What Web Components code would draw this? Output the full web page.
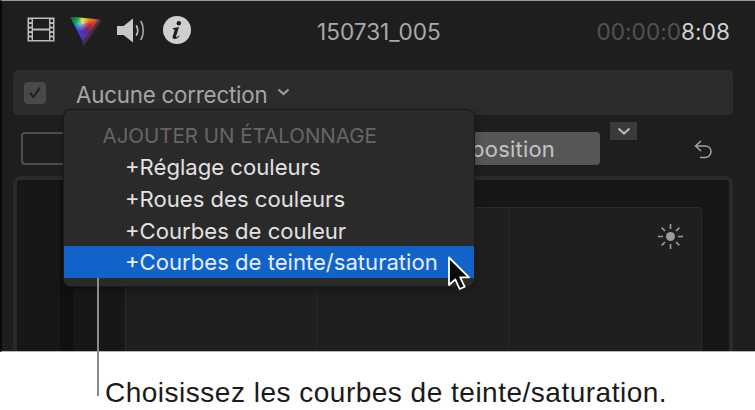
<!DOCTYPE html>
<html lang="fr"><head><meta charset="utf-8"><title>Courbes</title>
<style>
html,body{margin:0;padding:0;background:#fff}
body{width:755px;height:410px;overflow:hidden;font-family:Inter,"Liberation Sans",sans-serif}
</style></head><body>
<fcp-shell>
  <fcp-header slot="head"></fcp-header>
  <correction-bar slot="head"></correction-bar>
  <fcp-toolbar slot="head"></fcp-toolbar>
  <graph-panel slot="head"></graph-panel>
  <popup-menu slot="over">
    <menu-item heading>AJOUTER UN ÉTALONNAGE</menu-item>
    <menu-item>+Réglage couleurs</menu-item>
    <menu-item>+Roues des couleurs</menu-item>
    <menu-item>+Courbes de couleur</menu-item>
    <menu-item active>+Courbes de teinte/saturation</menu-item>
  </popup-menu>
  <mouse-cursor slot="over"></mouse-cursor>
</fcp-shell>
<callout-caption>Choisissez les courbes de teinte/saturation.</callout-caption>
<script>
function def(name,html){
  customElements.define(name,class extends HTMLElement{
    constructor(){super();this.attachShadow({mode:'open'}).innerHTML=html;}
  });
}
def('fcp-shell',`<style>
:host{display:block;position:relative;height:350px;box-sizing:content-box;background:#1e1e1e;border-top:1px solid #9a9a9a;border-left:2px solid #070707;border-bottom:1px solid #b5b5b5;width:753px;overflow:visible}
.clip{height:350px;overflow:hidden;display:flex;flex-direction:column}
</style><div class="clip"><slot name="head"></slot></div><slot name="over"></slot>`);

def('fcp-header',`<style>
:host{display:flex;align-items:center;height:69px;box-sizing:border-box;padding:0 24px 8px 25px;color:#c4c4c4;font:22.6px Inter,"Liberation Sans",sans-serif;flex:none}
.icons{display:flex;align-items:center;width:290px;flex:none;margin-top:-3px}
svg,.tri{display:block;flex:none}
.title{color:#a9a9a9}
.tc{margin-left:auto;color:#d0d0d0;margin-right:1px;letter-spacing:.05px}
.tc span{color:#525252}
.triwrap{position:relative;width:32px;height:30px;margin-left:15px;margin-top:3px}
.shade{position:absolute;inset:0;background:#3d3040;clip-path:polygon(100% 13%,42% 100%,38% 80%,86% 10%)}
.tri{position:absolute;inset:0;clip-path:polygon(0 0,92% 10%,40% 84%);background:radial-gradient(circle at 38% 24%,rgba(255,255,255,.5),rgba(255,255,255,0) 22%),conic-gradient(from 0deg at 38% 24%,#d5e23a 0deg,#f09a2a 50deg,#c22f2f 92deg,#63287a 140deg,#4b35c0 185deg,#2f62e6 235deg,#10a59a 275deg,#28c24a 320deg,#d5e23a 360deg)}
.tri::after{content:"";position:absolute;inset:0;background:linear-gradient(135deg,rgba(0,0,0,.55),transparent 22%),linear-gradient(to left,rgba(0,0,0,.55),transparent 25%),linear-gradient(to top,rgba(0,0,0,.4),transparent 30%)}
</style>
<div class="icons">
<svg width="28" height="26" viewBox="0 0 28 26" fill="none"><rect x=".5" y=".5" width="27" height="24" fill="#bdbdbd"/><rect x="6" y="2" width="16" height="9.5" fill="#1e1e1e"/><rect x="6" y="13.5" width="16" height="9.5" fill="#1e1e1e"/><g fill="#1e1e1e"><rect x="2" y="2.5" width="2.6" height="2.6"/><rect x="2" y="7" width="2.6" height="2.6"/><rect x="2" y="11.5" width="2.6" height="2.6"/><rect x="2" y="16" width="2.6" height="2.6"/><rect x="2" y="20.5" width="2.6" height="2.6"/><rect x="23.4" y="2.5" width="2.6" height="2.6"/><rect x="23.4" y="7" width="2.6" height="2.6"/><rect x="23.4" y="11.5" width="2.6" height="2.6"/><rect x="23.4" y="16" width="2.6" height="2.6"/><rect x="23.4" y="20.5" width="2.6" height="2.6"/></g></svg>
<div class="triwrap"><div class="shade"></div><div class="tri"></div></div>
<svg style="margin-left:15px" width="29" height="27" viewBox="0 0 29 27" fill="none"><path d="M0 9h6.5L16 1.5v24L6.5 18H0z" fill="#c8c8c8"/><path d="M19.5 9c1.6 2.8 1.6 6.2 0 9" stroke="#c0c0c0" stroke-width="1.7" stroke-linecap="round"/><path d="M24 4.500c3 5 3 13 0 18" stroke="#b0b0b0" stroke-width="1.500" stroke-linecap="round"/></svg>
<svg style="margin-left:17px;margin-right:0" width="28" height="28" viewBox="0 0 28 28"><circle cx="14" cy="14" r="14" fill="#cfcfcf"/><circle cx="15.800" cy="7.300" r="2.200" fill="#1e1e1e"/><path d="M9.800 12.200l6.200-1.100-3 9.300c-.2.700.4 1 1 .6l2-1.600.5.700c-1.500 1.800-3.200 3-5 3-1.600 0-2.300-1-1.800-2.500l2.100-7-1.900-.2z" fill="#1e1e1e"/></svg>
</div>
<div class="title">150731_005</div>
<div class="tc"><span>00:00:0</span>8:08</div>`);

def('correction-bar',`<style>
:host{display:flex;align-items:center;flex:none;height:45px;width:720px;margin-left:11px;background:#2c2c2c;border-radius:5px;box-sizing:border-box;padding-left:11px;color:#a6a6a6;font:22.3px Inter,"Liberation Sans",sans-serif}
.check{width:22px;height:22px;border-radius:4px;background:#494949;display:flex;align-items:center;justify-content:center;flex:none}
.label{margin-left:30px;letter-spacing:-.2px;position:relative;top:2px}
svg{margin-left:10px;position:relative;top:-1px}
</style><div class="check"><svg style="margin:0;top:0" width="14" height="13" viewBox="0 0 14 13" fill="none"><path d="M2 7l3.500 4L12 1.500" stroke="#222" stroke-width="2.200"/></svg></div>
<span class="label">Aucune correction</span>
<svg width="13" height="8" viewBox="0 0 13 8" fill="none"><path d="M1.500 1.500l5 4.500 5-4.500" stroke="#9a9a9a" stroke-width="2.200"/></svg>`);

def('fcp-toolbar',`<style>
:host{display:flex;flex:none;height:61px;position:relative;box-sizing:border-box;padding:17px 0 0 19px;font:22px Inter,"Liberation Sans",sans-serif;color:#c4c4c4}
.outline{width:300px;height:33px;box-sizing:border-box;border:2px solid #4f4f4f;border-radius:4px;flex:none}
.filled{margin-left:20px;width:259px;height:33px;box-sizing:border-box;background:#565656;border-radius:4px;flex:none;display:flex;align-items:center;justify-content:flex-end;padding-right:45px;letter-spacing:.2px}
.chev{width:27px;height:18px;background:#3a3a3a;margin:-10px 0 0 10px;display:flex;align-items:center;justify-content:center;flex:none}
.undo{margin:8px 0 0 57px;flex:none}
</style><div class="outline"></div><div class="filled">position</div>
<div class="chev"><svg width="14" height="9" viewBox="0 0 14 9" fill="none"><path d="M1.500 1.500l5.500 5 5.500-5" stroke="#b5b5b5" stroke-width="2.200"/></svg></div>
<svg class="undo" width="19" height="19" viewBox="0 0 19 19" fill="none"><path d="M7 1L1.500 6 7 11" stroke="#a5a5a5" stroke-width="1.500"/><path d="M2 6h9c3.500 0 6 2.400 6 5.500S14.500 17.500 11 17.500H6" stroke="#a5a5a5" stroke-width="1.500"/></svg>`);

def('graph-panel',`<style>
:host{display:block;flex:1;min-height:0;width:720px;margin-left:11px;box-sizing:border-box;border:4px solid #2a2a2a;border-bottom:0;border-right-width:4px;border-radius:7px 7px 0 0;background:#171717;overflow:hidden}
.in{display:flex;height:100%}
.a{width:43px;flex:none}
.b{width:13px;flex:none;background:#101010}
.c{width:52px;flex:none}
.graph{margin-top:27px;width:577px;flex:none;box-sizing:border-box;border:1px solid #2b2b2b;border-bottom:0;border-radius:4px 4px 0 0;background:#1f1f1f;display:grid;grid-template-columns:191px 192px 1fr;position:relative}
.graph div{border-right:1px solid #2a2a2a}
.graph div:last-of-type{border:0}
svg{position:absolute;top:15px;right:17px}
</style><div class="in"><div class="a"></div><div class="b"></div><div class="c"></div>
<div class="graph"><div></div><div></div><div></div>
<svg width="27" height="27" viewBox="0 0 27 27" fill="#9a9a9a" stroke="#9a9a9a"><circle cx="13.500" cy="13.500" r="4.500" stroke="none"/><g stroke-width="1.700"><path d="M13.500 1v5M13.500 21v5M1 13.500h5M21 13.500h5M4.700 4.700l3.300 3.300M19 19l3.300 3.300M22.300 4.700L19 8M8 19l-3.300 3.300"/></g></svg></div></div>`);

def('popup-menu',`<style>
:host{display:flex;flex-direction:column;position:absolute;left:62px;top:109px;width:410px;height:176px;box-sizing:border-box;padding:8px 0 8px;background:#2a2a2a;border-radius:7px;box-shadow:0 0 0 1px #1a1a1a,0 4px 10px rgba(0,0,0,.35);font:22.1px Inter,"Liberation Sans",sans-serif}
</style><slot></slot>`);

def('menu-item',`<style>
:host{display:flex;align-items:center;height:32px;flex:none;box-sizing:border-box;padding:2px 0 0 61px;color:#e2e2e2;white-space:nowrap}
:host([heading]){padding-left:38.5px;color:#666;font-size:20.5px}
:host([active]){background:#1263c9;color:#e6effa;padding-top:0}
</style><slot></slot>`);

def('mouse-cursor',`<style>
:host{display:block;position:absolute;left:445px;top:255px;width:26px;height:34px}
</style><svg width="26" height="34" viewBox="0 0 26 34"><path d="M2 1.500V29l6.300-5.700 4.400 9.700 5-2.200-4.500-9.400H22z" fill="#0a0a0a" stroke="#fff" stroke-width="1.800" stroke-linejoin="round"/></svg>`);

def('callout-caption',`<style>
:host{display:block;position:relative;height:58px;box-sizing:border-box;padding:25px 0 0 105px;color:#1a1a1a;font:28px "Liberation Sans",Arial,sans-serif;letter-spacing:.5px;white-space:nowrap}
.line{position:absolute;left:97px;top:-74px;width:2px;height:118px;background:#8b8b8b}
</style><div class="line"></div><slot></slot>`);
</script>
</body></html>
